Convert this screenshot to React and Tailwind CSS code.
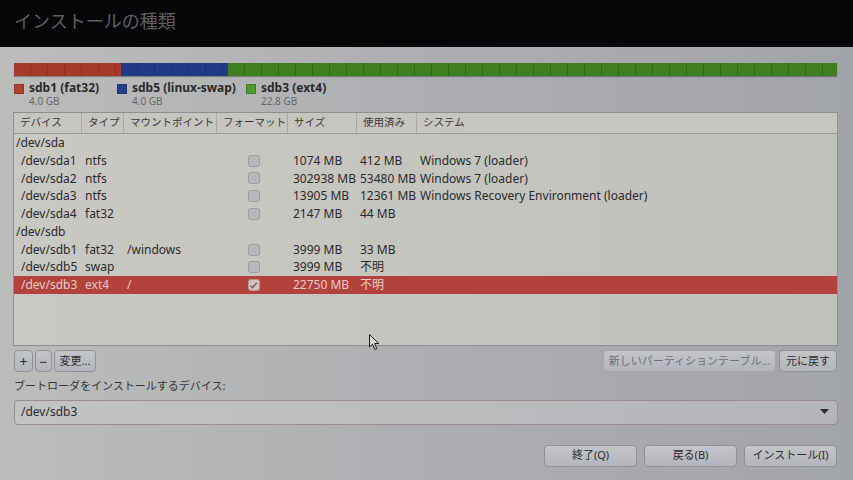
import React from "react";

const rows = [
  { group: "/dev/sda" },
  { dev: "/dev/sda1", type: "ntfs", mount: "", size: "1074 MB", used: "412 MB", sys: "Windows 7 (loader)" },
  { dev: "/dev/sda2", type: "ntfs", mount: "", size: "302938 MB", used: "53480 MB", sys: "Windows 7 (loader)" },
  { dev: "/dev/sda3", type: "ntfs", mount: "", size: "13905 MB", used: "12361 MB", sys: "Windows Recovery Environment (loader)" },
  { dev: "/dev/sda4", type: "fat32", mount: "", size: "2147 MB", used: "44 MB", sys: "" },
  { group: "/dev/sdb" },
  { dev: "/dev/sdb1", type: "fat32", mount: "/windows", size: "3999 MB", used: "33 MB", sys: "" },
  { dev: "/dev/sdb5", type: "swap", mount: "", size: "3999 MB", used: "不明", sys: "" },
  { dev: "/dev/sdb3", type: "ext4", mount: "/", size: "22750 MB", used: "不明", sys: "", selected: true, checked: true },
];

const legend = [
  { name: "sdb1 (fat32)", size: "4.0 GB", color: "bg-[#b2432f]", w: "w-[103px]" },
  { name: "sdb5 (linux-swap)", size: "4.0 GB", color: "bg-[#24408a]", w: "w-[129px]" },
  { name: "sdb3 (ext4)", size: "22.8 GB", color: "bg-[#4f9a2c]", w: "" },
];

const cols = [
  ["デバイス", "w-[68px]"],
  ["タイプ", "w-[42px]"],
  ["マウントポイント", "w-[93px]"],
  ["フォーマット", "w-[71px]"],
  ["サイズ", "w-[69px]"],
  ["使用済み", "w-[60px]"],
  ["システム", "flex-1"],
];

function Checkbox({ checked }) {
  return (
    <div className={`w-[12px] h-[12px] rounded-[3px] border flex items-center justify-center ${checked ? "bg-[#d3c2c1] border-[#c09390]" : "bg-[#b7b8bb] border-[#9c9da2]"}`}>
      {checked && (
        <svg width="9" height="9" viewBox="0 0 10 10">
          <path d="M1.5 5.2 L4 7.5 L8.5 2" fill="none" stroke="#7a5a5a" strokeWidth="1.6" />
        </svg>
      )}
    </div>
  );
}

function Btn({ children, className = "" }) {
  return (
    <div className={`h-[22px] flex items-center justify-center whitespace-nowrap rounded-[4px] border border-[#8f9297] bg-gradient-to-b from-[#c3c5c9] to-[#b2b5ba] text-[11px] text-[#2c2c2e] ${className}`}>
      {children}
    </div>
  );
}

export default function App() {
  return (
    <div
      className="w-[853px] h-[480px] overflow-hidden relative flex flex-col bg-[#050608] text-[#2a2a2c]"
      style={{ fontFamily: '"Noto Sans", "Noto Sans CJK JP", sans-serif' }}
    >
      {/* title */}
      <div className="h-[47px] shrink-0 flex items-center pl-[14px] pb-[5px] text-[18px] text-[#5f6063]">
        インストールの種類
      </div>

      {/* body */}
      <div className="flex-1 flex flex-col pl-[13px] pr-[15px] bg-gradient-to-r from-[#bcbcbb] via-[#adaeb1] to-[#a1a4a9]">
        {/* partition bar */}
        <div className="mt-[16px] ml-[1px] mr-[1px] h-[13px] flex shadow-[0_1px_1px_rgba(0,0,0,0.3)]">
          <div className="w-[107px] bg-[#a63a28] bg-[repeating-linear-gradient(90deg,transparent_0_16px,rgba(0,0,0,0.15)_16px_17px)]" />
          <div className="w-[107px] bg-[#213a86] bg-[repeating-linear-gradient(90deg,transparent_0_16px,rgba(0,0,0,0.15)_16px_17px)]" />
          <div className="flex-1 bg-[#3f7f22] bg-[repeating-linear-gradient(90deg,transparent_0_16px,rgba(0,0,0,0.18)_16px_17px)]" />
        </div>

        {/* legend */}
        <div className="mt-[5px] ml-[1px] flex h-[31px]">
          {legend.map((l) => (
            <div key={l.name} className={`flex ${l.w}`}>
              <div className={`w-[10px] h-[10px] mt-[3px] mr-[5px] ${l.color} border border-black/20`} />
              <div className="flex flex-col">
                <span className="text-[12px] font-bold leading-[14px] text-[#2a2a2c]">{l.name}</span>
                <span className="text-[10px] leading-[12px] text-[#66676b]">{l.size}</span>
              </div>
            </div>
          ))}
        </div>

        {/* table */}
        <div className="h-[234px] border border-[#8d8e92] bg-gradient-to-r from-[#c9c8c2] to-[#c1c1bc] flex flex-col text-[12px]">
          <div className="h-[21px] shrink-0 flex border-b border-[#9a9a98] bg-[#c6c5c0] text-[#3a3a3c] text-[10.5px]">
            {cols.map(([t, w], i) => (
              <div key={t} className={`${w} h-full flex items-center pl-[6px] whitespace-nowrap overflow-hidden ${i < 6 ? "border-r border-[#a9a9a6]" : ""}`}>
                {t}
              </div>
            ))}
          </div>
          <div>
            {rows.map((r, i) =>
              r.group ? (
                <div key={i} className="h-[17.8px] flex items-center pl-[2px]">{r.group}</div>
              ) : (
                <div key={i} className={`h-[17.8px] flex items-center ${r.selected ? "bg-[#b4423c] text-[#e6cbc8]" : ""}`}>
                  <div className="w-[68px] pl-[7px]">{r.dev}</div>
                  <div className="w-[42px] pl-[3px]">{r.type}</div>
                  <div className="w-[93px] pl-[3px]">{r.mount}</div>
                  <div className="w-[71px] flex justify-center pl-[2px]"><Checkbox checked={r.checked} /></div>
                  <div className="w-[69px] pl-[5px] whitespace-nowrap">{r.size}</div>
                  <div className="w-[60px] pl-[3px] whitespace-nowrap">{r.used}</div>
                  <div className="flex-1 pl-[3px] whitespace-nowrap">{r.sys}</div>
                </div>
              )
            )}
          </div>
        </div>

        {/* table buttons */}
        <div className="mt-[4px] flex items-center">
          <div className="flex gap-[2px] ml-[1px]">
            <Btn className="w-[19px] text-[14px]">+</Btn>
            <Btn className="w-[17px] text-[14px]">−</Btn>
            <Btn className="w-[42px]">変更...</Btn>
          </div>
          <div className="ml-auto mr-[1px] flex gap-[3px]">
            <Btn className="w-[173px] text-[#6e7075] border-[#a3a6ab]">新しいパーティションテーブル...</Btn>
            <Btn className="w-[58px]">元に戻す</Btn>
          </div>
        </div>

        {/* boot loader */}
        <div className="mt-[6px] ml-[1px] text-[11px] text-[#34353a]">ブートローダをインストールするデバイス:</div>
        <div className="mt-[5px] h-[25px] ml-[1px] rounded-[4px] border border-[#9c8c90] bg-gradient-to-r from-[#c3c3c2] to-[#b3b5b9] flex items-center pl-[6px] pr-[8px] text-[12px]">
          <span>/dev/sdb3</span>
          <svg className="ml-auto" width="9" height="6" viewBox="0 0 9 6"><path d="M0 0 L9 0 L4.5 5 Z" fill="#2c2c30" /></svg>
        </div>

        {/* bottom buttons */}
        <div className="mt-[20px] mr-[1px] flex justify-end gap-[7px]">
          <Btn className="w-[93px]">終了(Q)</Btn>
          <Btn className="w-[93px]">戻る(B)</Btn>
          <Btn className="w-[93px]">インストール(I)</Btn>
        </div>
      </div>

      {/* mouse cursor */}
      <svg className="absolute left-[369px] top-[334px]" width="12" height="17" viewBox="0 0 12 17">
        <path d="M0.5 0.5 L0.5 13 L3.5 10.2 L5.8 15.5 L7.8 14.6 L5.6 9.5 L9.8 9.5 Z" fill="#d7d8d6" stroke="#1c1c1e" strokeWidth="1" />
      </svg>
    </div>
  );
}
